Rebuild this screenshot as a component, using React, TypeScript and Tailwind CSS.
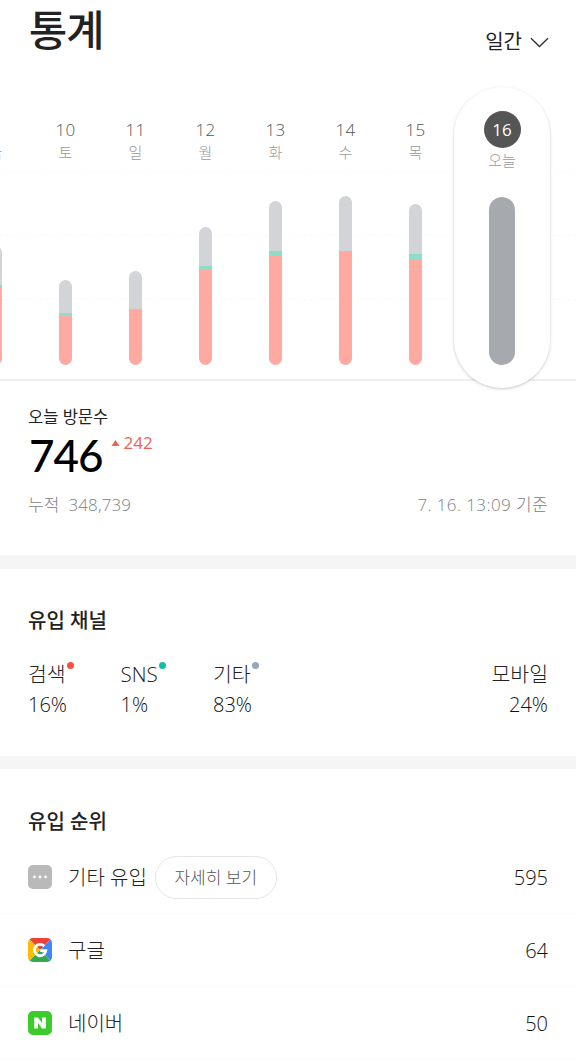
import clsx from "clsx";

interface Day {
  date: number;
  weekday: string;
  etc: number;
  sns: number;
  search: number;
}

// Segment heights in px
const DAYS: Day[] = [
  { date: 9, weekday: "금", etc: 39, sns: 2, search: 78 },
  { date: 10, weekday: "토", etc: 33, sns: 3, search: 49 },
  { date: 11, weekday: "일", etc: 38, sns: 0, search: 56 },
  { date: 12, weekday: "월", etc: 39, sns: 3, search: 96 },
  { date: 13, weekday: "화", etc: 50, sns: 4, search: 110 },
  { date: 14, weekday: "수", etc: 55, sns: 1, search: 113 },
  { date: 15, weekday: "목", etc: 50, sns: 5, search: 106 },
];

const CHANNELS = [
  { name: "검색", value: "16%", dot: "bg-[#f4523f]" },
  { name: "SNS", value: "1%", dot: "bg-[#12bfa5]" },
  { name: "기타", value: "83%", dot: "bg-[#98a5b3]" },
];

function EtcIcon() {
  return (
    <svg className="w-6 h-6" viewBox="0 0 24 24">
      <rect width="24" height="24" rx="5" fill="#b9b9b9" />
      <circle cx="6.5" cy="12" r="1.4" fill="#fff" />
      <circle cx="12" cy="12" r="1.4" fill="#fff" />
      <circle cx="17.5" cy="12" r="1.4" fill="#fff" />
    </svg>
  );
}

function GoogleIcon() {
  return (
    <svg className="w-6 h-6 rounded-[5px]" viewBox="0 0 24 24">
      <path d="M0 0h24L12 12z" fill="#ea4335" />
      <path d="M24 0v24L12 12z" fill="#4285f4" />
      <path d="M24 24H0l12-12z" fill="#34a853" />
      <path d="M0 24V0l12 12z" fill="#fbbc05" />
      <path
        d="M16.4 8.2A5.7 5.7 0 1 0 17.8 12.7H12.2"
        fill="none"
        stroke="#fff"
        strokeWidth="2.8"
      />
    </svg>
  );
}

function NaverIcon() {
  return (
    <svg className="w-6 h-6" viewBox="0 0 24 24">
      <rect width="24" height="24" rx="5" fill="#3bcb2b" />
      <path d="M6.2 6.5H10l4.1 5.6V6.5h3.8v11H14l-4-5.7v5.7H6.2z" fill="#fff" />
    </svg>
  );
}

const RANKS = [
  { name: "기타 유입", count: 595, icon: <EtcIcon />, detail: true },
  { name: "구글", count: 64, icon: <GoogleIcon />, detail: false },
  { name: "네이버", count: 50, icon: <NaverIcon />, detail: false },
];

function DayColumn({ day }: { day: Day }) {
  return (
    <div className="w-[70px] shrink-0 flex flex-col items-center pt-8">
      <span className="text-[17px] leading-[22px] tracking-[0.3px] font-light text-[#555]">{day.date}</span>
      <span className="text-[15px] leading-[22px] font-light text-[#999]">{day.weekday}</span>
      <div className="mt-auto mb-[13px] w-[13px] rounded-full overflow-hidden">
        <div className="bg-[#d3d4d8]" style={{ height: day.etc }} />
        <div className="bg-[#8adfc6]" style={{ height: day.sns }} />
        <div className="bg-[#fea9a2]" style={{ height: day.search }} />
      </div>
    </div>
  );
}

function Chart() {
  return (
    <div className="relative h-[294px] border-b-2 border-[#efefef]">
      <div className="absolute inset-x-0 top-[84px] border-t border-dashed border-[#fafafa]" />
      <div className="absolute inset-x-0 top-[148px] border-t border-dashed border-[#f9f9f9]" />
      <div className="absolute inset-x-0 top-[212px] border-t border-dashed border-[#f8f8f8]" />
      <div className="relative flex h-[291px] ml-[-39.5px]">
        {DAYS.map((day) => (
          <DayColumn key={day.date} day={day} />
        ))}
        <div className="ml-[3.5px] w-24 h-[301px] shrink-0 rounded-full bg-white shadow-[0_1px_3px_rgba(0,0,0,0.22)] flex flex-col items-center pt-6">
          <span className="size-[37px] rounded-full bg-[#555] text-white text-[17px] leading-[37px] text-center">
            16
          </span>
          <span className="text-[15px] leading-[22px] mt-[1px] font-light text-[#999]">오늘</span>
          <div className="mt-[26px] w-[26px] h-[168px] rounded-full bg-[#a6aaae]" />
        </div>
      </div>
    </div>
  );
}

export default function App() {
  return (
    <div className="w-[576px] h-[1061px] overflow-hidden bg-white text-[#222] font-['Open_Sans','Noto_Sans_CJK_KR',sans-serif]">
      <header className="h-[87px] flex justify-between pl-[29px] pr-[27px]">
        <h1 className="text-[41.5px] leading-[60px] font-medium tracking-[-1px]">통계</h1>
        <button className="flex items-center h-[30px] mt-[27px] text-[20px]">
          일간
          <svg className="w-[19px] h-[11px] ml-2" viewBox="0 0 19 11" fill="none" stroke="#333" strokeWidth="1.4">
            <path d="M1 1.2l8.5 8.3L18 1.2" />
          </svg>
        </button>
      </header>

      <Chart />

      <section className="h-[174px] px-7 pt-6">
        <h2 className="text-[16.5px] leading-6">오늘 방문수</h2>
        <div className="flex items-start">
          <strong className="ml-px text-[44px] leading-[52px] tracking-[-1px] font-['Lato',sans-serif] font-medium text-black">
            746
          </strong>
          <span className="flex items-center text-[17px] leading-[26px] ml-2 mt-px text-[#ee6253]">
            <svg className="w-[9px] h-[6px] mr-1" viewBox="0 0 8 6" fill="currentColor">
              <path d="M4 0l4 6H0z" />
            </svg>
            242
          </span>
        </div>
        <div className="flex justify-between mt-[12px] text-[17px] leading-6 text-[#808080] font-light">
          <span className="tracking-[0.1px]">누적&nbsp; 348,739</span>
          <span className="tracking-[0.4px]">7. 16. 13:09 기준</span>
        </div>
      </section>

      <div className="h-[14px] bg-[#f5f5f5]" />

      <section className="h-[187px] px-7 pt-[37px]">
        <h2 className="text-[20px] leading-[30px] font-medium">유입 채널</h2>
        <div className="flex mt-[23px] text-[20px] font-light">
          {CHANNELS.map((c) => (
            <dl key={c.name} className="w-[92.5px]">
              <dt className="flex items-start leading-[31px] text-[20.5px]">
                {c.name}
                <span className={clsx("size-[7px] rounded-full ml-px mt-[3px]", c.dot)} />
              </dt>
              <dd className="leading-[30px] text-[#111]">{c.value}</dd>
            </dl>
          ))}
          <dl className="ml-auto text-right">
            <dt className="leading-[31px] text-[20.5px]">모바일</dt>
            <dd className="leading-[30px] text-[#111]">24%</dd>
          </dl>
        </div>
      </section>

      <div className="h-[13px] bg-[#f5f5f5]" />

      <section className="pt-[38px]">
        <h2 className="px-7 text-[20px] leading-[30px] font-medium">유입 순위</h2>
        <ul className="mt-1">
          {RANKS.map((r) => (
            <li key={r.name} className="h-[73px] px-7 flex items-center border-b border-[#fafafa] text-[20px] font-light">
              {r.icon}
              <span className="ml-4 pt-0.5">{r.name}</span>
              {r.detail && (
                <button className="ml-2 w-[122px] h-[43px] pt-0.5 rounded-full border border-[#e6e6e6] text-[17px] text-[#555]">
                  자세히 보기
                </button>
              )}
              <span className="ml-auto pt-0.5 text-[#111]">{r.count}</span>
            </li>
          ))}
        </ul>
      </section>
    </div>
  );
}
